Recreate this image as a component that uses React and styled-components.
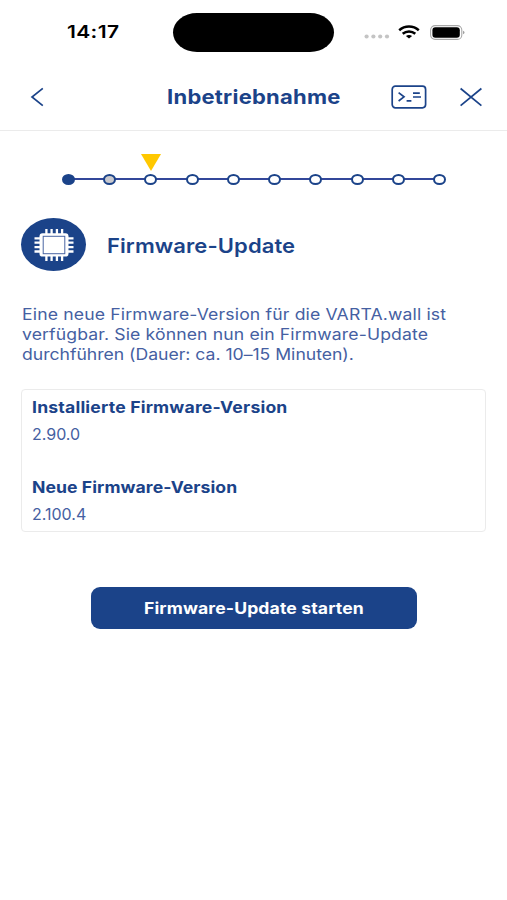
import React from 'react';
import styled, { createGlobalStyle } from 'styled-components';

const STEPS = ['done', 'skipped', 'open', 'open', 'open', 'open', 'open', 'open', 'open', 'open'];
const CURRENT_STEP = 2;

const DESCRIPTION = [
  { text: 'Eine neue Firmware-Version für die VARTA.wall ist', spacing: 0.14 },
  { text: 'verfügbar. Sie können nun ein Firmware-Update', spacing: 0.12 },
  { text: 'durchführen (Dauer: ca. 10–15 Minuten).', spacing: -0.01 },
];

function StatusBar() {
  return (
    <Status>
      <Clock>
        <Wide $scale={1.2} $spacing={0.3}>
          14:17
        </Wide>
      </Clock>
      <Island />
      <StatusIcons>
        <svg width="26" height="5" viewBox="0 0 26 5" fill="#c4c4c4">
          <ellipse cx="2.6" cy="2.5" rx="2.1" ry="2" />
          <ellipse cx="9.4" cy="2.5" rx="2.1" ry="2" />
          <ellipse cx="16.2" cy="2.5" rx="2.1" ry="2" />
          <ellipse cx="23" cy="2.5" rx="2.1" ry="2" />
        </svg>
        <svg width="22" height="14" viewBox="0 0 22 14" fill="none" stroke="#000" strokeWidth="2.5">
          <path d="M1.2 5.2C6.8 .3 15.2 .3 20.8 5.2" />
          <path d="M4.7 8.8C8.3 5.7 13.7 5.7 17.3 8.8" />
          <path d="M11 13.6L7.9 11C9.6 9.5 12.4 9.5 14.1 11Z" fill="#000" stroke="none" />
        </svg>
        <svg width="36" height="15" viewBox="0 0 36 15">
          <rect x=".6" y=".6" width="31.2" height="13.8" rx="4.5" fill="none" stroke="#a8a8a8" strokeWidth="1.1" />
          <rect x="2.4" y="2.3" width="27.4" height="10.4" rx="3" fill="#000" />
          <path d="M33.2 5.8C34.9 6.3 34.9 8.7 33.2 9.2Z" fill="#8a8a8a" />
        </svg>
      </StatusIcons>
    </Status>
  );
}

function Header() {
  return (
    <Bar>
      <IconButton aria-label="Zurück">
        <svg width="14" height="20" viewBox="0 0 14 20" fill="none" stroke="#1b4389" strokeWidth="1.7">
          <path d="M12.8 1.3L2 10L12.8 18.7" />
        </svg>
      </IconButton>
      <Title>
        <Wide $center $spacing={0.2}>
          Inbetriebnahme
        </Wide>
      </Title>
      <Actions>
        <IconButton aria-label="Konsole">
          <svg width="36" height="24" viewBox="0 0 36 24" fill="none" stroke="#1b4389" strokeWidth="1.7">
            <rect x="1.2" y="1.2" width="33.4" height="21.6" rx="3.2" />
            <path d="M7.6 7.6L13 11.8L7.6 16" />
            <path d="M15.6 15.8H20.4M22 8.2H28.8M22 12H30" />
          </svg>
        </IconButton>
        <IconButton aria-label="Schließen">
          <svg width="22" height="20" viewBox="0 0 22 20" fill="none" stroke="#1b4389" strokeWidth="1.7">
            <path d="M.6 1.5L21.4 18.7M21.4 1.5L.6 18.7" />
          </svg>
        </IconButton>
      </Actions>
    </Bar>
  );
}

function Stepper() {
  return (
    <Track>
      {STEPS.map((state, i) => (
        <Step key={i}>
          {i === CURRENT_STEP && <Marker />}
          <Dot $state={state} />
        </Step>
      ))}
    </Track>
  );
}

function ChipIcon() {
  return (
    <svg width="42" height="34" viewBox="0 0 42 34" fill="none" stroke="#fff">
      <path
        d="M13.4 1V33M18.6 1V33M23.9 1V33M29.1 1V33M1.5 10.3H40.5M1.5 14.7H40.5M1.5 19.1H40.5M1.5 23.5H40.5"
        strokeWidth="2.3"
      />
      <rect x="6.5" y="5.2" width="29" height="23.4" rx="3" fill="#fff" stroke="none" />
      <rect x="10.2" y="8.3" width="21.6" height="17.4" stroke="#4a66a3" strokeWidth="1" />
    </svg>
  );
}

function App() {
  return (
    <Screen>
      <GlobalStyle />
      <StatusBar />
      <Header />
      <Stepper />
      <Content>
        <Heading>
          <Badge>
            <ChipIcon />
          </Badge>
          <HeadingText>
            <Wide $spacing={0.08}>Firmware-Update</Wide>
          </HeadingText>
        </Heading>
        <Description>
          {DESCRIPTION.map((line) => (
            <Line key={line.text}>
              <Wide $spacing={line.spacing}>{line.text}</Wide>
            </Line>
          ))}
        </Description>
        <Versions>
          <Label>
            <Wide $spacing={0.17}>Installierte Firmware-Version</Wide>
          </Label>
          <Value>2.90.0</Value>
          <Label>
            <Wide $spacing={0.06}>Neue Firmware-Version</Wide>
          </Label>
          <Value>2.100.4</Value>
        </Versions>
        <StartButton>
          <Wide $center $spacing={0.11}>
            Firmware-Update starten
          </Wide>
        </StartButton>
      </Content>
    </Screen>
  );
}

export default App;

const GlobalStyle = createGlobalStyle`
  * {
    box-sizing: border-box;
  }
  body {
    margin: 0;
    background: #fff;
    color: #1b4389;
    font-family: Inter, 'Liberation Sans', sans-serif;
  }
  svg {
    display: block;
  }
`;

const Wide = styled.span`
  display: inline-block;
  letter-spacing: ${(props) => props.$spacing || 0}px;
  transform: scaleX(${(props) => props.$scale || 1.1});
  transform-origin: ${(props) => (props.$center ? 'center' : 'left')};
  white-space: nowrap;
`;

const Screen = styled.main`
  height: 900px;
  width: 507px;
  overflow: hidden;
`;

const Status = styled.div`
  align-items: center;
  display: grid;
  grid-template-columns: 173px 161px 1fr;
  height: 64px;
`;

const Clock = styled.div`
  color: #000;
  font-size: 17.5px;
  font-weight: 600;
  margin-top: -1px;
  padding-left: 67px;
`;

const Island = styled.div`
  background: #000;
  border-radius: 24px / 19.5px;
  height: 39px;
`;

const StatusIcons = styled.div`
  align-items: center;
  display: flex;
  padding-left: 30px;

  svg:nth-child(1) {
    margin-right: 8px;
    margin-top: 9px;
  }
  svg:nth-child(2) {
    margin-right: 10px;
  }
`;

const Bar = styled.header`
  align-items: center;
  border-bottom: 1px solid #ebebeb;
  display: grid;
  grid-template-columns: 138px 1fr 138px;
  height: 67px;

  > button {
    margin-left: 30px;
  }
`;

const IconButton = styled.button`
  background: none;
  border: 0;
  padding: 0;
  width: fit-content;
`;

const Title = styled.h1`
  font-size: 20px;
  font-weight: 650;
  margin: 0;
  text-align: center;
`;

const Actions = styled.div`
  display: flex;
  align-items: center;
  gap: 33px;
  padding-left: 22px;
`;

const Track = styled.div`
  background: linear-gradient(#33479a, #33479a) 69px 47px / 370px 2px no-repeat;
  display: flex;
  height: 87px;
  justify-content: space-between;
  padding: 0 60px 0 61px;
`;

const Step = styled.div`
  align-items: center;
  display: flex;
  flex-direction: column;
  height: 54px;
  justify-content: flex-end;
  width: 15px;
`;

const Marker = styled.div`
  border-left: 10px solid transparent;
  border-right: 10px solid transparent;
  border-top: 17px solid #ffc800;
  margin-bottom: 3px;
`;

const dotColors = { done: '#1b4389', skipped: '#c9c9ce', open: '#fff' };

const Dot = styled.div`
  background: ${(props) => dotColors[props.$state]};
  border: 2px solid #1b4389;
  border-radius: 50%;
  height: 11px;
  width: 13px;
`;

const Content = styled.section`
  padding: 0 21px;
`;

const Heading = styled.div`
  align-items: center;
  display: flex;
  gap: 20.5px;
`;

const Badge = styled.div`
  align-items: center;
  background: #1b4389;
  border-radius: 50%;
  display: flex;
  height: 53px;
  justify-content: center;
  width: 65px;
`;

const HeadingText = styled.h2`
  font-size: 20px;
  font-weight: 620;
  margin: 2px 0 0;
`;

const Description = styled.div`
  color: #4560a2;
  font-size: 16px;
  line-height: 20px;
  margin-top: 33px;
  padding-left: 0.5px;
`;

const Line = styled.div`
  height: 20px;
`;

const Versions = styled.div`
  border: 1.5px solid #ebebeb;
  border-radius: 4px;
  height: 143px;
  margin-top: 25px;
  padding: 7px 10px;
`;

const Label = styled.div`
  font-size: 16px;
  font-weight: 700;
  height: 20px;
  line-height: 20px;
`;

const Value = styled.div`
  color: #4560a2;
  font-size: 16px;
  height: 20px;
  line-height: 20px;
  margin: 7px 0 33px;
`;

const StartButton = styled.button`
  background: #1b4389;
  border: 0;
  border-radius: 9px;
  color: #fff;
  display: block;
  font-family: inherit;
  font-size: 16px;
  font-weight: 700;
  height: 42px;
  margin: 55px auto 0 70px;
  padding: 0;
  width: 326px;
`;
